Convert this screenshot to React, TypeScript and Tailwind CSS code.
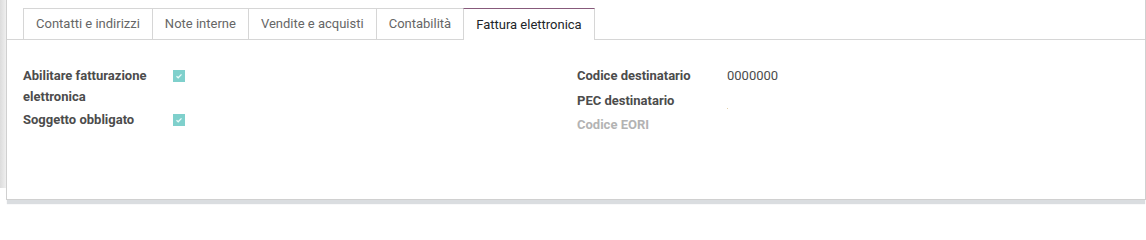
import React from 'react';

const tabs = ['Contatti e indirizzi', 'Note interne', 'Vendite e acquisti', 'Contabilità', 'Fattura elettronica'];

const Check: React.FC = () => (
  <span className="flex h-[12px] w-[12px] items-center justify-center bg-[#7fd0cc]">
    <svg width="8" height="8" viewBox="0 0 8 8">
      <path d="M1.5 4.3 L3.2 5.8 L6.5 2.4" fill="none" stroke="#eafaf8" strokeWidth="1.3" />
    </svg>
  </span>
);

export default function App() {
  const active = 4;
  return (
    <div className="flex h-[207px] w-[1146px] bg-white font-['Roboto',sans-serif] text-[13px] overflow-hidden">
      <div className="h-[188px] w-[6px] bg-gradient-to-r from-[#dcdcdc] to-[#efefef]" />
      <div className="flex h-[200px] flex-1 flex-col border-l border-r border-b border-[#d0d0d0] bg-white shadow-[0_5px_1px_-1px_#dadde0]">
        {/* tabs */}
        <div className="flex h-[40px] items-end border-b border-[#d6d6d6] pl-[16px]">
          {tabs.map((t, i) =>
            i === active ? (
              <div
                key={t}
                className="-mb-px flex h-[32px] items-center border-x border-t border-x-[#d6d6d6] border-t-[#875a7b] bg-white px-[12px] text-[#212529]"
              >
                {t}
              </div>
            ) : (
              <div
                key={t}
                className="flex h-[31px] items-center border-t border-l border-[#d6d6d6] px-[12px] text-[#666666]"
              >
                {t}
              </div>
            )
          )}
        </div>

        {/* groups */}
        <div className="grid grid-cols-2 gap-x-0 px-[16px] pt-[25px]">
          <div className="flex flex-col">
            <div className="flex pb-[2px]">
              <div className="w-[150px] font-bold leading-[21px] text-[#4c4c4c]">
                Abilitare fatturazione
                <br />
                elettronica
              </div>
              <div className="flex h-[21px] items-center">
                <Check />
              </div>
            </div>
            <div className="flex pb-[2px]">
              <div className="w-[150px] font-bold leading-[21px] text-[#4c4c4c]">Soggetto obbligato</div>
              <div className="flex h-[21px] items-center">
                <Check />
              </div>
            </div>
          </div>

          <div className="flex flex-col pl-[1px]">
            <div className="flex pb-[3.5px]">
              <div className="w-[150px] font-bold leading-[21px] text-[#4c4c4c]">Codice destinatario</div>
              <div className="leading-[21px] text-[#4c4c4c]">0000000</div>
            </div>
            <div className="flex pb-[3.5px]">
              <div className="w-[150px] font-bold leading-[21px] text-[#4c4c4c]">PEC destinatario</div>
              <div className="flex h-[21px] items-end pb-[2px]">
                <span className="h-px w-px bg-[#e2cfa8]" />
              </div>
            </div>
            <div className="flex pb-[3.5px]">
              <div className="w-[150px] font-bold leading-[21px] text-[#b3b3b3]">Codice EORI</div>
            </div>
          </div>
        </div>
      </div>
    </div>
  );
}
